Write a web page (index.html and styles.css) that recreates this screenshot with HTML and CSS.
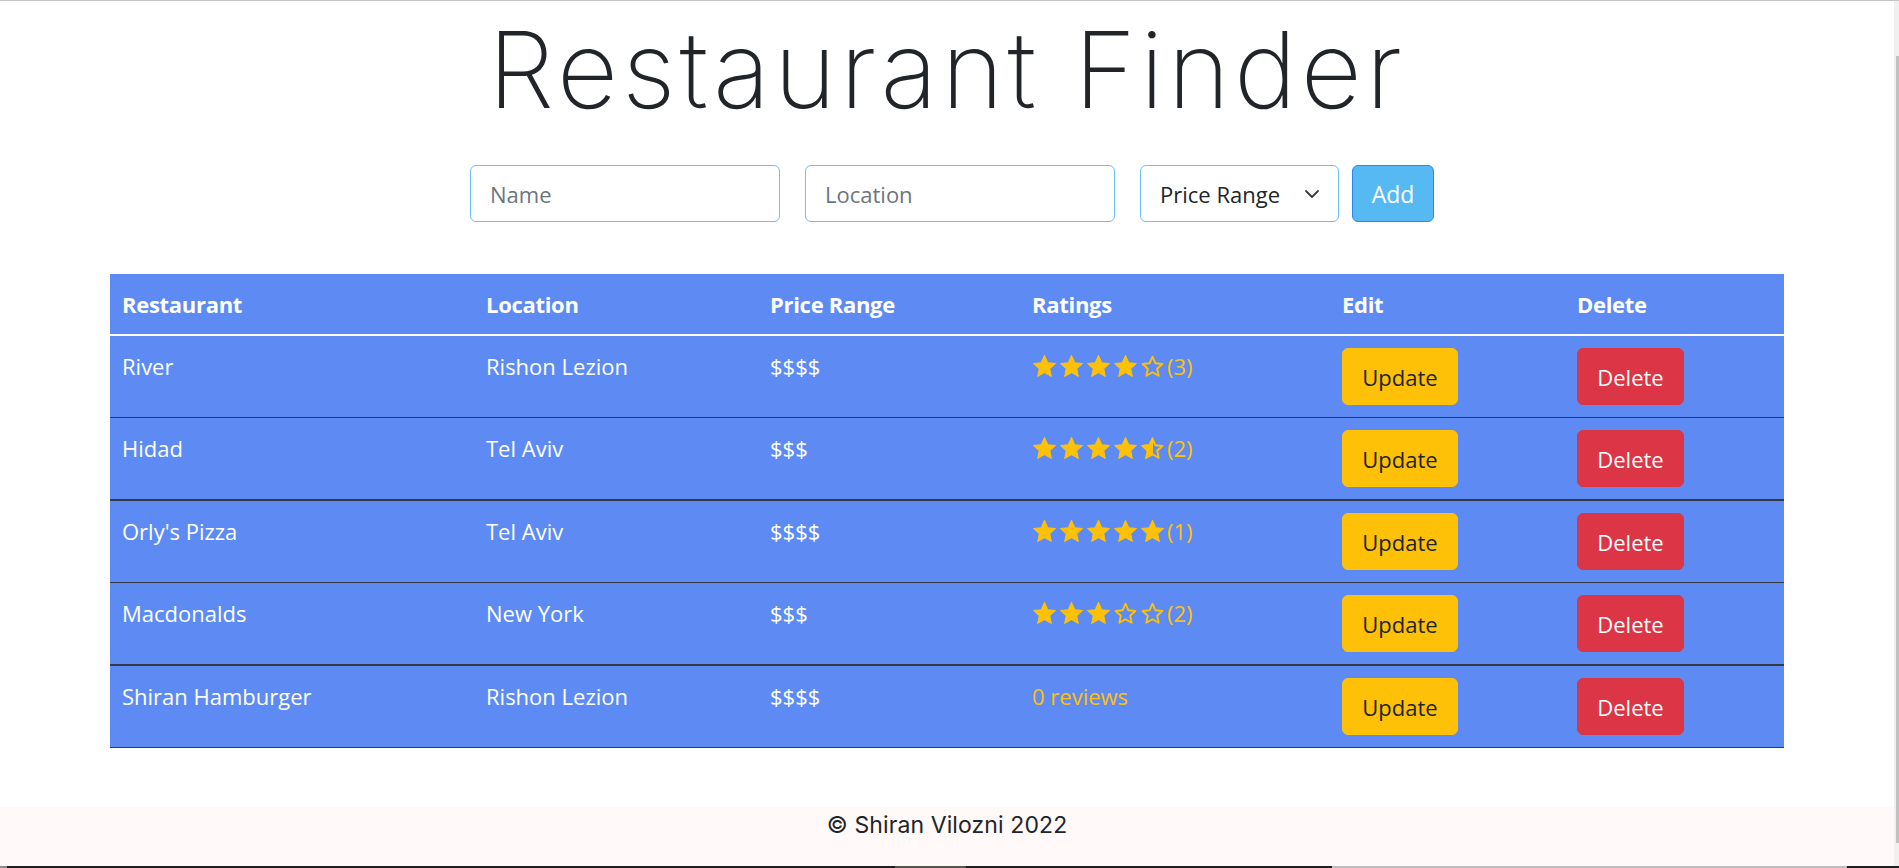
FILE: index.html
```html
<!DOCTYPE html>
<html lang="en">
<head>
<meta charset="utf-8">
<title>Restaurant Finder</title>
<link rel="stylesheet" href="styles.css">
</head>
<body>
<div class="screen">
  <div class="topline"></div>
  <div class="frame">
    <div class="page">
      <main class="content">
        <h1 class="title">Restaurant Finder</h1>
        <form class="add-form">
          <input class="field field-text" type="text" placeholder="Name">
          <input class="field field-text" type="text" placeholder="Location">
          <div class="field field-select">
            <span>Price Range</span>
            <svg class="chevron" viewBox="0 0 16 16" width="16" height="16"><path d="M2 5l6 6 6-6" fill="none" stroke="#343a40" stroke-width="1.8" stroke-linecap="round" stroke-linejoin="round"/></svg>
          </div>
          <button class="btn-add" type="button">Add</button>
        </form>
        <table class="restaurants">
          <colgroup>
            <col class="c1"><col class="c2"><col class="c3"><col class="c4"><col class="c5"><col class="c6">
          </colgroup>
          <thead>
            <tr><th>Restaurant</th><th>Location</th><th>Price Range</th><th>Ratings</th><th>Edit</th><th>Delete</th></tr>
          </thead>
          <tbody>
            <tr>
              <td>River</td><td>Rishon Lezion</td><td>$$$$</td>
              <td><span class="rating">
                <svg class="star" viewBox="0 0 24 24"><polygon class="full" points="12,1.5 15.1,8.3 22.5,9.1 17,14.1 18.5,21.5 12,17.8 5.5,21.5 7,14.1 1.5,9.1 8.9,8.3"/></svg>
                <svg class="star" viewBox="0 0 24 24"><polygon class="full" points="12,1.5 15.1,8.3 22.5,9.1 17,14.1 18.5,21.5 12,17.8 5.5,21.5 7,14.1 1.5,9.1 8.9,8.3"/></svg>
                <svg class="star" viewBox="0 0 24 24"><polygon class="full" points="12,1.5 15.1,8.3 22.5,9.1 17,14.1 18.5,21.5 12,17.8 5.5,21.5 7,14.1 1.5,9.1 8.9,8.3"/></svg>
                <svg class="star" viewBox="0 0 24 24"><polygon class="full" points="12,1.5 15.1,8.3 22.5,9.1 17,14.1 18.5,21.5 12,17.8 5.5,21.5 7,14.1 1.5,9.1 8.9,8.3"/></svg>
                <svg class="star" viewBox="0 0 24 24"><polygon class="empty" points="12,2.5 14.8,8.9 21.5,9.6 16.5,14.2 17.9,20.9 12,17.5 6.1,20.9 7.5,14.2 2.5,9.6 9.2,8.9"/></svg>
                <span class="count">(3)</span></span></td>
              <td><button class="btn btn-update" type="button">Update</button></td>
              <td><button class="btn btn-delete" type="button">Delete</button></td>
            </tr>
            <tr>
              <td>Hidad</td><td>Tel Aviv</td><td>$$$</td>
              <td><span class="rating">
                <svg class="star" viewBox="0 0 24 24"><polygon class="full" points="12,1.5 15.1,8.3 22.5,9.1 17,14.1 18.5,21.5 12,17.8 5.5,21.5 7,14.1 1.5,9.1 8.9,8.3"/></svg>
                <svg class="star" viewBox="0 0 24 24"><polygon class="full" points="12,1.5 15.1,8.3 22.5,9.1 17,14.1 18.5,21.5 12,17.8 5.5,21.5 7,14.1 1.5,9.1 8.9,8.3"/></svg>
                <svg class="star" viewBox="0 0 24 24"><polygon class="full" points="12,1.5 15.1,8.3 22.5,9.1 17,14.1 18.5,21.5 12,17.8 5.5,21.5 7,14.1 1.5,9.1 8.9,8.3"/></svg>
                <svg class="star" viewBox="0 0 24 24"><polygon class="full" points="12,1.5 15.1,8.3 22.5,9.1 17,14.1 18.5,21.5 12,17.8 5.5,21.5 7,14.1 1.5,9.1 8.9,8.3"/></svg>
                <svg class="star" viewBox="0 0 24 24"><polygon class="full" points="12,1.5 12,17.8 5.5,21.5 7,14.1 1.5,9.1 8.9,8.3"/><polygon class="empty" points="12,2.5 14.8,8.9 21.5,9.6 16.5,14.2 17.9,20.9 12,17.5 6.1,20.9 7.5,14.2 2.5,9.6 9.2,8.9"/></svg>
                <span class="count">(2)</span></span></td>
              <td><button class="btn btn-update" type="button">Update</button></td>
              <td><button class="btn btn-delete" type="button">Delete</button></td>
            </tr>
            <tr>
              <td>Orly's Pizza</td><td>Tel Aviv</td><td>$$$$</td>
              <td><span class="rating">
                <svg class="star" viewBox="0 0 24 24"><polygon class="full" points="12,1.5 15.1,8.3 22.5,9.1 17,14.1 18.5,21.5 12,17.8 5.5,21.5 7,14.1 1.5,9.1 8.9,8.3"/></svg>
                <svg class="star" viewBox="0 0 24 24"><polygon class="full" points="12,1.5 15.1,8.3 22.5,9.1 17,14.1 18.5,21.5 12,17.8 5.5,21.5 7,14.1 1.5,9.1 8.9,8.3"/></svg>
                <svg class="star" viewBox="0 0 24 24"><polygon class="full" points="12,1.5 15.1,8.3 22.5,9.1 17,14.1 18.5,21.5 12,17.8 5.5,21.5 7,14.1 1.5,9.1 8.9,8.3"/></svg>
                <svg class="star" viewBox="0 0 24 24"><polygon class="full" points="12,1.5 15.1,8.3 22.5,9.1 17,14.1 18.5,21.5 12,17.8 5.5,21.5 7,14.1 1.5,9.1 8.9,8.3"/></svg>
                <svg class="star" viewBox="0 0 24 24"><polygon class="full" points="12,1.5 15.1,8.3 22.5,9.1 17,14.1 18.5,21.5 12,17.8 5.5,21.5 7,14.1 1.5,9.1 8.9,8.3"/></svg>
                <span class="count">(1)</span></span></td>
              <td><button class="btn btn-update" type="button">Update</button></td>
              <td><button class="btn btn-delete" type="button">Delete</button></td>
            </tr>
            <tr>
              <td>Macdonalds</td><td>New York</td><td>$$$</td>
              <td><span class="rating">
                <svg class="star" viewBox="0 0 24 24"><polygon class="full" points="12,1.5 15.1,8.3 22.5,9.1 17,14.1 18.5,21.5 12,17.8 5.5,21.5 7,14.1 1.5,9.1 8.9,8.3"/></svg>
                <svg class="star" viewBox="0 0 24 24"><polygon class="full" points="12,1.5 15.1,8.3 22.5,9.1 17,14.1 18.5,21.5 12,17.8 5.5,21.5 7,14.1 1.5,9.1 8.9,8.3"/></svg>
                <svg class="star" viewBox="0 0 24 24"><polygon class="full" points="12,1.5 15.1,8.3 22.5,9.1 17,14.1 18.5,21.5 12,17.8 5.5,21.5 7,14.1 1.5,9.1 8.9,8.3"/></svg>
                <svg class="star" viewBox="0 0 24 24"><polygon class="empty" points="12,2.5 14.8,8.9 21.5,9.6 16.5,14.2 17.9,20.9 12,17.5 6.1,20.9 7.5,14.2 2.5,9.6 9.2,8.9"/></svg>
                <svg class="star" viewBox="0 0 24 24"><polygon class="empty" points="12,2.5 14.8,8.9 21.5,9.6 16.5,14.2 17.9,20.9 12,17.5 6.1,20.9 7.5,14.2 2.5,9.6 9.2,8.9"/></svg>
                <span class="count">(2)</span></span></td>
              <td><button class="btn btn-update" type="button">Update</button></td>
              <td><button class="btn btn-delete" type="button">Delete</button></td>
            </tr>
            <tr>
              <td>Shiran Hamburger</td><td>Rishon Lezion</td><td>$$$$</td>
              <td><span class="count">0 reviews</span></td>
              <td><button class="btn btn-update" type="button">Update</button></td>
              <td><button class="btn btn-delete" type="button">Delete</button></td>
            </tr>
          </tbody>
        </table>
      </main>
      <footer class="footer">© Shiran Vilozni 2022</footer>
    </div>
    <div class="scrollbar"><div class="thumb"></div></div>
  </div>
  <div class="taskbar">
    <span class="tb-a"></span><span class="tb-b"></span><span class="tb-c"></span><span class="tb-d"></span><span class="tb-e"></span><span class="tb-f"></span>
  </div>
</div>
</body>
</html>
```
FILE: styles.css
```css
* { box-sizing: border-box; }
html, body { margin: 0; padding: 0; }
body {
  width: 1899px;
  height: 868px;
  overflow: hidden;
  background: #ffffff;
  font-family: "Open Sans", "Noto Sans", sans-serif;
  color: #212529;
}
.screen { display: flex; flex-direction: column; height: 868px; }
.topline { height: 1px; background: #c6c6c6; flex: none; }
.frame { flex: 1; display: flex; min-height: 0; }
.page { flex: 1; display: flex; flex-direction: column; min-width: 0; }
.content { flex: 1; }
.scrollbar { width: 5px; background: #f0f0f0; padding-top: 55px; flex: none; }
.thumb { width: 3px; margin-left: 2px; height: 787px; background: #c1c1c1; }
.taskbar { height: 2px; display: flex; flex: none; }
.taskbar span { display: block; height: 2px; }
.tb-a { width: 7px; background: #8a8a8a; }
.tb-b { width: 888px; background: #202020; }
.tb-c { width: 71px; background: #555550; }
.tb-d { width: 366px; background: #202020; }
.tb-e { width: 515px; background: #bdbdbd; }
.tb-f { flex: 1; background: #202020; }

.title {
  margin: 0;
  text-align: center;
  font-family: "Inter", "Lato", sans-serif;
  font-weight: 200;
  font-size: 106px;
  line-height: 138px;
  color: #212529;
  letter-spacing: 4px;
}

.add-form {
  margin-top: 26px;
  display: flex;
  justify-content: center;
  padding-left: 10px;
}
.field {
  height: 57px;
  border: 1px solid #6cc0f2;
  border-radius: 6px;
  background: #fff;
  font-family: "Open Sans", "Noto Sans", sans-serif;
  font-size: 22px;
  color: #212529;
  padding: 0 19px;
}
.field-text { width: 310px; margin-right: 25px; outline: none; }
.field-text::placeholder { color: #6c757d; }
.field-select {
  width: 199px;
  margin-right: 13px;
  display: flex;
  align-items: center;
  justify-content: space-between;
  padding-right: 18px;
}
.chevron { width: 16px; height: 16px; }
.btn-add {
  width: 82px;
  height: 57px;
  background: #56b9f1;
  border: 1px solid #2f86f0;
  border-radius: 6px;
  color: #fff;
  font-family: "Open Sans", "Noto Sans", sans-serif;
  font-size: 23px;
  padding: 0;
}

.restaurants {
  margin: 52px auto 0;
  width: 1674px;
  table-layout: fixed;
  border-collapse: collapse;
  background: #5d8bf3;
  color: #fff;
  font-size: 22px;
}
.c1 { width: 364px; } .c2 { width: 284px; } .c3 { width: 262px; }
.c4 { width: 310px; } .c5 { width: 235px; } .c6 { width: 219px; }
.restaurants th {
  text-align: left;
  font-weight: 700;
  padding: 12px;
  line-height: 36px;
  border-bottom: 2px solid #ffffff;
  letter-spacing: -0.3px;
}
.restaurants td {
  padding: 12px;
  line-height: 36px;
  vertical-align: top;
  border-bottom: 1px solid #343a40;
  white-space: nowrap;
}
.restaurants tbody tr:nth-child(even) td { border-bottom-width: 2px; }

.rating { display: inline-flex; align-items: center; height: 36px; vertical-align: top; }
.star { width: 25px; height: 25px; margin-right: 2px; flex: none; }
.star .full { fill: #ffc107; stroke: #ffc107; stroke-width: 1; stroke-linejoin: round; }
.star .empty { fill: none; stroke: #ffc107; stroke-width: 1.8; stroke-linejoin: round; }
.count { color: #ffc107; }

.btn {
  height: 57px;
  border-radius: 6px;
  font-family: "Open Sans", "Noto Sans", sans-serif;
  font-size: 22px;
  padding: 0 17px;
  border: 1px solid transparent;
}
.btn-update { width: 116px; background: #ffc107; border-color: #ffc107; color: #212529; }
.btn-delete { width: 107px; background: #dc3545; border-color: #dc3545; color: #fff; }

.footer {
  height: 59px;
  background: #fff9f9;
  text-align: center;
  font-family: "Inter", "Lato", sans-serif;
  font-size: 23px;
  line-height: 36px;
  color: #212529;
  letter-spacing: 0.1px;
}
```
